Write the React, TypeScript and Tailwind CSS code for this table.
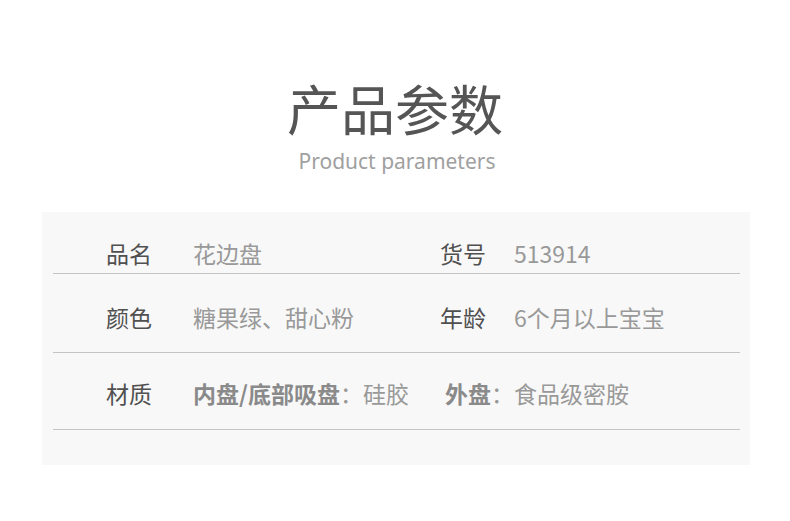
export default function App() {
  const font = { fontFamily: '"Noto Sans CJK SC", "Noto Sans", sans-serif' };
  return (
    <div className="w-[790px] h-[521px] bg-white" style={font}>
      <div className="flex flex-col items-center pt-[74px]">
        <div className="text-[54px] leading-[68px] text-[#555555]">产品参数</div>
        <div
          className="text-[21px] leading-[28px] text-[#a0a0a0] mt-[5px] pl-[4px]"
          style={{ fontFamily: '"Noto Sans", sans-serif' }}
        >
          Product parameters
        </div>
      </div>
      <div className="mx-[42px] mt-[37px] w-[708px] h-[253px] bg-[#f8f8f8] pl-[11px] pr-[10px]">
        <div className="h-[62px] border-b border-[#c4c4c4] pt-[26px] flex text-[23px] leading-[30px]">
          <div className="w-[53px]" />
          <div className="w-[87px] text-[#505050]">品名</div>
          <div className="w-[247px] text-[#999999]">花边盘</div>
          <div className="w-[74px] text-[#505050]">货号</div>
          <div className="text-[#999999]">513914</div>
        </div>
        <div className="h-[79px] border-b border-[#c4c4c4] pt-[28px] flex text-[23px] leading-[30px]">
          <div className="w-[53px]" />
          <div className="w-[87px] text-[#505050]">颜色</div>
          <div className="w-[247px] text-[#999999]">糖果绿、甜心粉</div>
          <div className="w-[74px] text-[#505050]">年龄</div>
          <div className="text-[#999999]">6个月以上宝宝</div>
        </div>
        <div className="h-[77px] border-b border-[#c4c4c4] pt-[25px] flex text-[23px] leading-[30px]">
          <div className="w-[53px]" />
          <div className="w-[87px] text-[#505050]">材质</div>
          <div className="text-[#999999] whitespace-nowrap flex">
            <span className="font-bold text-[#8a8a8a]">内盘/底部吸盘</span>
            <span>：硅胶</span>
            <span className="inline-block w-[36px]" />
            <span className="font-bold text-[#8a8a8a]">外盘</span>
            <span>：食品级密胺</span>
          </div>
        </div>
      </div>
    </div>
  );
}
